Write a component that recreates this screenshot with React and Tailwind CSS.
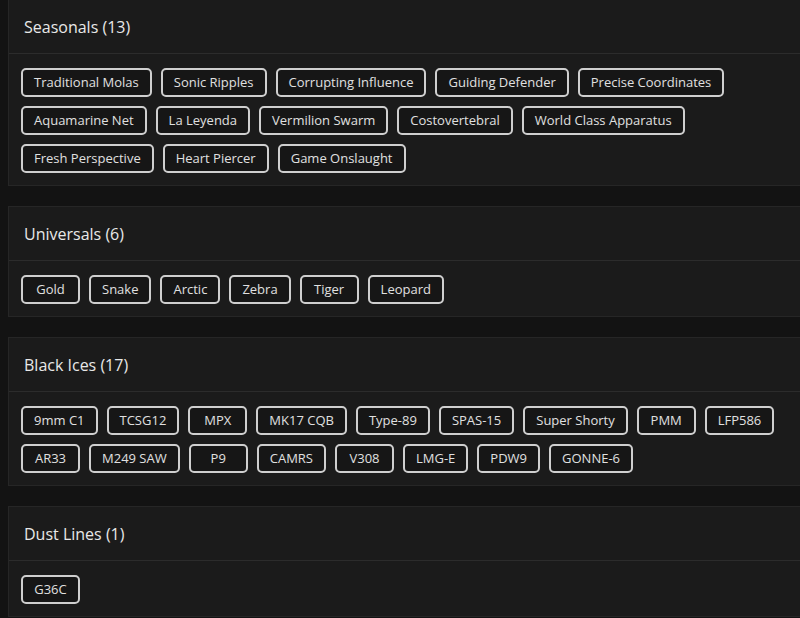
import React from "react";

// Grupos de skins con sus elementos
const groups = [
  {
    title: "Seasonals",
    items: [
      "Traditional Molas",
      "Sonic Ripples",
      "Corrupting Influence",
      "Guiding Defender",
      "Precise Coordinates",
      "Aquamarine Net",
      "La Leyenda",
      "Vermilion Swarm",
      "Costovertebral",
      "World Class Apparatus",
      "Fresh Perspective",
      "Heart Piercer",
      "Game Onslaught",
    ],
  },
  {
    title: "Universals",
    items: ["Gold", "Snake", "Arctic", "Zebra", "Tiger", "Leopard"],
  },
  {
    title: "Black Ices",
    items: [
      "9mm C1",
      "TCSG12",
      "MPX",
      "MK17 CQB",
      "Type-89",
      "SPAS-15",
      "Super Shorty",
      "PMM",
      "LFP586",
      "AR33",
      "M249 SAW",
      "P9",
      "CAMRS",
      "V308",
      "LMG-E",
      "PDW9",
      "GONNE-6",
    ],
  },
  {
    title: "Dust Lines",
    items: ["G36C"],
  },
];

const Chip = ({ label }) => (
  <span className="h-[29px] min-w-[59px] flex items-center justify-center px-[11px] border-2 border-[#cfcfcf] rounded-[5px] bg-[#161616] text-[13px] text-[#e0e0e0] whitespace-nowrap">
    {label}
  </span>
);

const GroupCard = ({ title, items }) => (
  <div className="w-[812px] ml-[8px] bg-[#1b1b1b] border border-[#262626]">
    <div className="h-[54px] flex items-center px-[15px] border-b border-[#2c2c2c]">
      <h2 className="text-[16px] font-medium text-[#e8e8e8]">
        {title} ({items.length})
      </h2>
    </div>
    <div className="pl-[12px] pr-[10px] pt-[14px] pb-[12px] flex flex-wrap gap-x-[9px] gap-y-[9px]">
      {items.map((item) => (
        <Chip key={item} label={item} />
      ))}
    </div>
  </div>
);

export default function App() {
  return (
    <div
      className="w-[800px] h-[618px] overflow-hidden bg-[#131313]"
      style={{ fontFamily: '"Open Sans", "Noto Sans", sans-serif' }}
    >
      <div className="-mt-[1px] flex flex-col gap-[20px]">
        {groups.map((g) => (
          <GroupCard key={g.title} title={g.title} items={g.items} />
        ))}
      </div>
    </div>
  );
}
